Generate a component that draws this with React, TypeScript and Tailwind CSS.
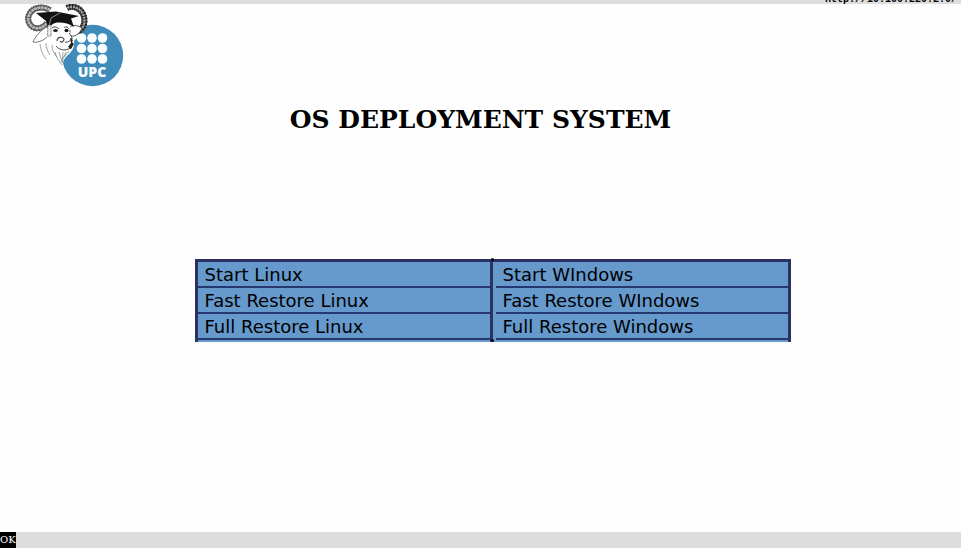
import React from 'react';

type MenuEntry = {
  id: string;
  label: string;
};

const linuxEntries: MenuEntry[] = [
  { id: 'start-linux', label: 'Start Linux' },
  { id: 'fast-linux', label: 'Fast Restore Linux' },
  { id: 'full-linux', label: 'Full Restore Linux' },
];

const windowsEntries: MenuEntry[] = [
  { id: 'start-windows', label: 'Start WIndows' },
  { id: 'fast-windows', label: 'Fast Restore WIndows' },
  { id: 'full-windows', label: 'Full Restore Windows' },
];

const LEFT_HORN = 'M50 10 C43 6 34 7 30 13 C26 19 29 26 35 28 C40 29 44 27 47 23';
const RIGHT_HORN = 'M67 8 C73 5 80 8 83 14 C86 21 84 28 79 31 C76 32 73 31 71 29';

const Logo: React.FC = () => (
  <svg width="104" height="88" viewBox="22 4 104 88" role="img" aria-label="UPC">
    <circle cx="92.5" cy="55.5" r="30.7" fill="#3f8cba" />
    {[38, 48.5, 59].map((cy) =>
      [81.5, 92, 102.5].map((cx) => (
        <circle key={`${cx}-${cy}`} cx={cx} cy={cy} r="4.8" fill="#f8fdff" />
      )),
    )}
    <text
      x="92"
      y="77"
      textAnchor="middle"
      fill="#f8fdff"
      fontFamily="'Open Sans', sans-serif"
      fontWeight="800"
      fontSize="14"
    >
      UPC
    </text>

    {/* head */}
    <path
      d="M44 18 C42 26 37 32 36 42 C38 52 46 60 58 63 L63 64 C63 59 66 57 70 53 C73 50 75 45 74 41 C78 37 81 33 82 28 L80 14 L66 8 Z"
      fill="#fefefe"
    />

    {/* horns */}
    <path d={LEFT_HORN} fill="none" stroke="#777" strokeWidth="6" />
    <path d={LEFT_HORN} fill="none" stroke="#333" strokeWidth="6" strokeDasharray="0.7 1.5" />
    <path d={LEFT_HORN} fill="none" stroke="#bbb" strokeWidth="2.4" strokeDasharray="2.8 0.6" />
    <path d={RIGHT_HORN} fill="none" stroke="#555" strokeWidth="6" />
    <path d={RIGHT_HORN} fill="none" stroke="#161616" strokeWidth="6" strokeDasharray="1 1.6" />
    <path d={RIGHT_HORN} fill="none" stroke="#aaa" strokeWidth="1.8" strokeDasharray="2.2 0.9" />

    {/* ears */}
    <path d="M47 27 C42 29 36 35 33 42 C37 43 43 41 47 37" fill="#fefefe" stroke="#666" strokeWidth="0.9" />
    <path d="M70 27 C74 24 79 26 82 28 C80 33 76 37 71 36" fill="#fefefe" stroke="#333" strokeWidth="0.8" />

    {/* mortarboard */}
    <path d="M36 13 L56 11.5 L79 16 L71 18.5 L74 27 C69 23 62 22 57 22.5 C53 23 51 25 48 29 L46 21 Z" fill="#121212" />
    <path d="M60 13 L51 18 L49 26" fill="none" stroke="#8a8a8a" strokeWidth="1" />
    <path d="M48 25 L47.5 36 L51 36 L51 25 Z" fill="#eee" stroke="#555" strokeWidth="0.7" strokeDasharray="2 0.6" />

    {/* eyes, nose and mouth */}
    <path d="M52 28 C54 26 57 27 59 29 M64 28 C66 26 68 27 69 29" fill="none" stroke="#333" strokeWidth="1" />
    <ellipse cx="55.5" cy="30.5" rx="2.4" ry="1.5" fill="#222" />
    <ellipse cx="66.5" cy="30.5" rx="2" ry="1.7" fill="#111" />
    <path d="M57 41 C57 37 62 36 64 39 C64 42 61 43 60 41" fill="none" stroke="#444" strokeWidth="1.1" />
    <path d="M65 42 C68 43 71 40 72 38 M56 46 C60 51 67 51 72 47 M69 33 C71 35 72 37 72 39" fill="none" stroke="#444" strokeWidth="1" />
    <path d="M70 38 L73 40 L72 42 L74 44 L71 49 L68 47 L71 43 Z" fill="#222" />

    {/* beard */}
    <path
      d="M40 44 C41 51 43 55 46 59 M46 43 C46 48 48 52 50 55 M52 45 C52 50 54 54 57 57 M55 52 C56 57 59 61 62 65 M59 52 L62 62 M63 52 L62 63 M66 52 L62 61 M69 51 L64 57"
      fill="none"
      stroke="#888"
      strokeWidth="0.8"
    />
  </svg>
);

const MenuColumn: React.FC<{ label: string; entries: MenuEntry[] }> = ({ label, entries }) => (
  <ul aria-label={label} className="flex-1 pb-[2px]">
    {entries.map((entry) => (
      <li key={entry.id} className="border-b-2 border-[#26386f]">
        <button type="button" className="block h-6 w-full px-[7px] text-left leading-[26px] hover:bg-[#7aa8d6]">
          {entry.label}
        </button>
      </li>
    ))}
  </ul>
);

const App: React.FC = () => (
  <div className="flex min-h-screen flex-col bg-[#fefefe] text-black">
    <header className="flex h-1 items-end justify-end overflow-hidden bg-[#dddddd] px-1 font-['Liberation_Mono',monospace] text-[10px] leading-2 font-bold">
      <span>http://10.100.220.2.0/</span>
    </header>

    <main className="flex-1">
      <div className="px-[22px]">
        <Logo />
      </div>

      <h1 className="mt-3 text-center font-['DejaVu_Serif',serif] text-[25px] leading-8 font-bold">
        OS DEPLOYMENT SYSTEM
      </h1>

      <div className="mt-[123px] pl-6">
        <nav
          aria-label="Deployment options"
          className="mx-auto flex w-[596px] max-w-full border-x-[3px] border-t-[3px] border-[#2b3162] bg-[#6699cc] font-['DejaVu_Sans',sans-serif] text-[18px]"
        >
          <MenuColumn label="Linux" entries={linuxEntries} />
          <div className="relative mr-[3px] w-[3px] bg-[#2b3162]">
            <span className="absolute -top-1 left-px size-[3px] rounded-full bg-black" />
            <span className="absolute bottom-0 left-px size-[3px] rounded-full bg-black" />
          </div>
          <MenuColumn label="Windows" entries={windowsEntries} />
        </nav>
      </div>
    </main>

    <footer className="flex h-4 bg-[#dddddd] font-['DejaVu_Serif',serif] text-[10px] leading-4">
      <span className="bg-black text-white">OK</span>
    </footer>
  </div>
);

export default App;
